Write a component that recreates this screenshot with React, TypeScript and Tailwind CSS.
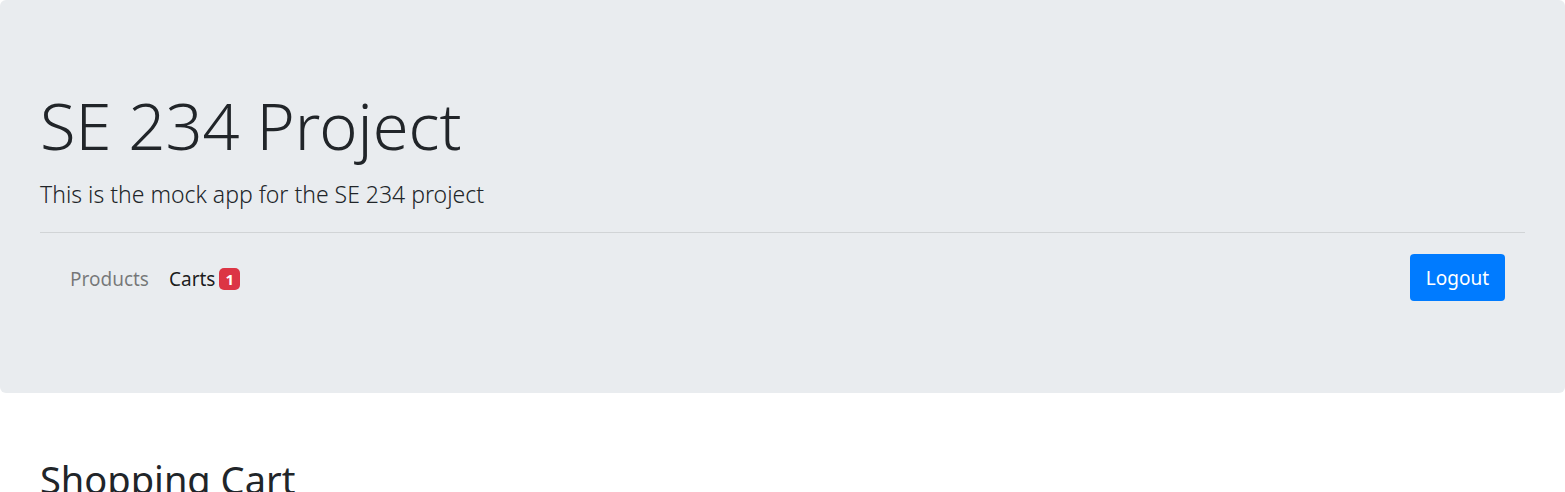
export default function App() {
  return (
    <div className="font-['Noto_Sans','Open_Sans',sans-serif] text-xl leading-[30px] text-[#212529]">
      <header className="rounded-md bg-[#e9ecef] px-10 py-20">
        <h1 className="mt-[3px] text-[65px] leading-[84px] font-light">SE 234 Project</h1>
        <p className="mt-[9px] text-[23px] leading-9 font-light">This is the mock app for the SE 234 project</p>
        <hr className="mt-5 border-black/10" />
        <nav className="flex items-center justify-between px-5 pt-[21px] pb-3">
          <div className="flex pt-[2px]">
            <a href="#products" className="px-[10px] text-[19px] text-black/50">Products</a>
            <a href="#carts" className="flex items-center gap-1 px-[10px] text-[19px] text-black/90">
              Carts
              <span className="rounded-[5px] bg-[#dc3545] px-[6px] text-[15px] leading-[22px] font-bold text-white">1</span>
            </a>
          </div>
          <button type="button" className="rounded bg-[#007bff] px-4 pt-[9px] pb-2 text-[19px] leading-[30px] text-white">Logout</button>
        </nav>
      </header>
      <main className="px-10 pt-[62px]">
        <h2 className="text-[38px] leading-[48px] font-normal">Shopping Cart</h2>
      </main>
    </div>
  );
}
